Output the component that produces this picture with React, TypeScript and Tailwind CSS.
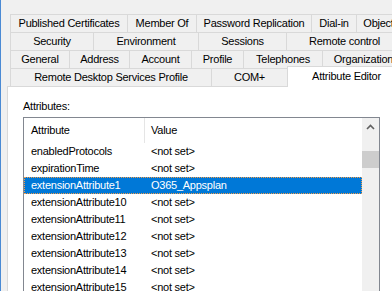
import React from "react";

const font = { fontFamily: '"Liberation Sans", Arial, sans-serif' };

type Tab = { label: string; w: number };

const rows: Tab[][] = [
  [
    { label: "Published Certificates", w: 117 },
    { label: "Member Of", w: 69 },
    { label: "Password Replication", w: 115 },
    { label: "Dial-in", w: 45 },
    { label: "Object", w: 44 },
  ],
  [
    { label: "Security", w: 83 },
    { label: "Environment", w: 105 },
    { label: "Sessions", w: 88 },
    { label: "Remote control", w: 116 },
  ],
  [
    { label: "General", w: 59 },
    { label: "Address", w: 60 },
    { label: "Account", w: 62 },
    { label: "Profile", w: 52 },
    { label: "Telephones", w: 79 },
    { label: "Organization", w: 82 },
  ],
];

const attrs: { name: string; value: string; selected?: boolean }[] = [
  { name: "enabledProtocols", value: "<not set>" },
  { name: "expirationTime", value: "<not set>" },
  { name: "extensionAttribute1", value: "O365_Appsplan", selected: true },
  { name: "extensionAttribute10", value: "<not set>" },
  { name: "extensionAttribute11", value: "<not set>" },
  { name: "extensionAttribute12", value: "<not set>" },
  { name: "extensionAttribute13", value: "<not set>" },
  { name: "extensionAttribute14", value: "<not set>" },
  { name: "extensionAttribute15", value: "<not set>" },
];

function TabCell({ label, w }: Tab) {
  return (
    <div
      className="shrink-0 flex items-center justify-center border-l border-t border-[#d9d9d9] whitespace-nowrap"
      style={{ width: w }}
    >
      {label}
    </div>
  );
}

export default function App() {
  return (
    <div
      className="w-[392px] h-[291px] overflow-hidden bg-[#f0f0f0] flex text-[11px] tracking-[-0.25px] text-black"
      style={font}
    >
      {/* window edge */}
      <div className="w-px shrink-0 bg-[#4a8ad4]" />

      <div className="flex-1 flex flex-col pt-[14px] min-w-0">
        {/* tab rows */}
        {rows.map((r, i) => (
          <div key={i} className="flex h-[18px] ml-[9px] shrink-0">
            {r.map((t) => (
              <TabCell key={t.label} {...t} />
            ))}
          </div>
        ))}
        <div className="flex items-end h-[18px] ml-[9px] shrink-0">
          <div className="shrink-0 w-[201px] h-[18px] flex items-center justify-center border-l border-t border-[#d9d9d9] whitespace-nowrap">
            Remote Desktop Services Profile
          </div>
          <div className="shrink-0 w-[76px] h-[18px] flex items-center justify-center border-l border-t border-[#d9d9d9]">
            COM+
          </div>
          <div className="relative z-10 shrink-0 w-[118px] h-[21px] -mb-px bg-white flex items-center justify-center border-l border-t border-[#d9d9d9] whitespace-nowrap pb-px">
            Attribute Editor
          </div>
        </div>

        {/* panel */}
        <div className="flex-1 ml-[6px] bg-white border-l border-t border-[#d9d9d9] pl-[15px] pt-[13px]">
          <div className="leading-[13px]">Attributes:</div>
          <div className="mt-[4px] w-[357px] border border-[#828790] flex">
            <div className="flex-1 flex flex-col">
              <div className="flex h-[25px] items-center shrink-0">
                <div className="w-[121px] h-full flex items-center pl-[7px] border-r border-[#e5e5e5]">
                  Attribute
                </div>
                <div className="flex-1 pl-[6px]">Value</div>
              </div>
              {attrs.map((a) => (
                <div
                  key={a.name}
                  className={
                    a.selected
                      ? "flex h-[17px] items-center shrink-0 bg-[#0078d7] text-white outline-1 outline-dotted outline-[#f29d49] -outline-offset-1"
                      : "flex h-[17px] items-center shrink-0"
                  }
                >
                  <div className="w-[121px] pl-[7px] whitespace-nowrap">{a.name}</div>
                  <div className="flex-1 pl-[6px] whitespace-nowrap">{a.value}</div>
                </div>
              ))}
            </div>
            {/* scrollbar */}
            <div className="w-[17px] shrink-0 bg-[#f0f0f0] flex flex-col items-center">
              <div className="h-[17px] w-full flex items-center justify-center">
                <svg width="9" height="6" viewBox="0 0 9 6">
                  <path d="M1 5 L4.5 1.5 L8 5" fill="none" stroke="#606060" strokeWidth="1.6" />
                </svg>
              </div>
              <div className="mt-[16px] h-[17px] w-full bg-[#cdcdcd]" />
            </div>
          </div>
        </div>
      </div>
    </div>
  );
}
